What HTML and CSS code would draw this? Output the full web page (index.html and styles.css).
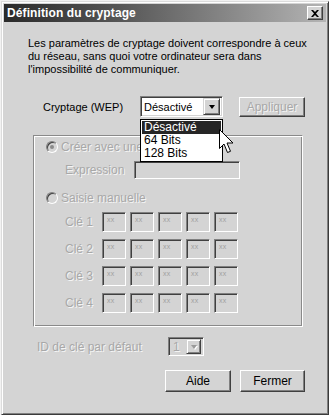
FILE: index.html
```html
<!DOCTYPE html>
<html lang="fr">
<head>
<meta charset="utf-8">
<title>Définition du cryptage</title>
<link rel="stylesheet" href="styles.css">
</head>
<body>
<div class="window">
  <div class="titlebar">
    <span class="title">Définition du cryptage</span>
    <span class="close"><svg width="8" height="7" viewBox="0 0 8 7"><path d="M0 0h2l2 2 2-2h2L5 3.5 8 7H6L4 5 2 7H0l3-3.5z" fill="#000"/></svg></span>
  </div>
  <div class="content">
    <p class="intro">Les paramètres de cryptage doivent correspondre à ceux<br>du réseau, sans quoi votre ordinateur sera dans<br>l'impossibilité de communiquer.</p>

    <div class="row-crypt">
      <span class="lbl-crypt">Cryptage (WEP)</span>
      <div class="combo">
        <span class="combo-val">Désactivé</span>
        <span class="arrow-btn"><span class="tri"></span></span>
        <ul class="droplist">
          <li class="sel">Désactivé</li>
          <li>64 Bits</li>
          <li>128 Bits</li>
        </ul>
        <svg class="cursor" width="17" height="25" viewBox="0 0 17 25"><path d="M0.5 0.5V19.5L5 15L8.5 23.5L11.5 22.3L8 14H14Z" fill="#fff" stroke="#000" stroke-width="1"/></svg>
      </div>
      <span class="btn btn-apply disabled">Appliquer</span>
    </div>

    <div class="group">
      <div class="g-row radio-row">
        <span class="radio checked"></span><span class="dis">Créer avec une</span>
      </div>
      <div class="g-row expr-row">
        <span class="dis lbl-expr">Expression</span>
        <span class="field expr-field"></span>
      </div>
      <div class="g-row radio-row radio2">
        <span class="radio"></span><span class="dis">Saisie manuelle</span>
      </div>
      <div class="g-row key-row first">
        <span class="dis lbl-key">Clé 1</span>
        <span class="field key"><i>xx</i></span><span class="field key"><i>xx</i></span><span class="field key"><i>xx</i></span><span class="field key"><i>xx</i></span><span class="field key"><i>xx</i></span>
      </div>
      <div class="g-row key-row">
        <span class="dis lbl-key">Clé 2</span>
        <span class="field key"><i>xx</i></span><span class="field key"><i>xx</i></span><span class="field key"><i>xx</i></span><span class="field key"><i>xx</i></span><span class="field key"><i>xx</i></span>
      </div>
      <div class="g-row key-row">
        <span class="dis lbl-key">Clé 3</span>
        <span class="field key"><i>xx</i></span><span class="field key"><i>xx</i></span><span class="field key"><i>xx</i></span><span class="field key"><i>xx</i></span><span class="field key"><i>xx</i></span>
      </div>
      <div class="g-row key-row">
        <span class="dis lbl-key">Clé 4</span>
        <span class="field key"><i>xx</i></span><span class="field key"><i>xx</i></span><span class="field key"><i>xx</i></span><span class="field key"><i>xx</i></span><span class="field key"><i>xx</i></span>
      </div>
    </div>

    <div class="row-id">
      <span class="dis lbl-id">ID de clé par défaut</span>
      <span class="field id-combo"><span class="dis id-val">1</span><span class="arrow-btn small"><span class="tri gray"></span></span></span>
    </div>

    <div class="row-buttons">
      <span class="btn btn-aide">Aide</span>
      <span class="btn btn-fermer">Fermer</span>
    </div>
  </div>
</div>
</body>
</html>
```

FILE: styles.css
```css
* { box-sizing: border-box; }
html, body { margin: 0; padding: 0; }
body {
  background: #f2f2f2;
  width: 329px;
  height: 415px;
  overflow: hidden;
  padding: 1px 0 0 1px;
  font-family: "Liberation Sans", Arial, sans-serif;
  font-size: 11px;
  color: #000;
}
.window {
  width: 328px;
  height: 414px;
  background: #d4d4d4;
  border: 1px solid;
  border-color: #dcdcdc #3a3a3a #3a3a3a #dcdcdc;
  box-shadow: inset 1px 1px #fff, inset -1px -1px #808080;
  padding: 2px;
  display: flex;
  flex-direction: column;
}
.titlebar {
  height: 18px;
  background: linear-gradient(to right, #2a2a2a 0%, #555 35%, #b4b4b4 100%);
  display: flex;
  align-items: center;
  justify-content: space-between;
  padding: 0 3px 0 3px;
}
.title {
  color: #fff;
  font-weight: bold;
  font-size: 12px;
  letter-spacing: 0.1px;
}
.close {
  width: 16px;
  height: 14px;
  background: #d4d4d4;
  border: 1px solid;
  border-color: #fff #404040 #404040 #fff;
  box-shadow: inset -1px -1px #808080;
  display: flex;
  align-items: center;
  justify-content: center;
}
.close svg { display: block; margin: 0 1px 0 0; }

.content {
  padding: 0 0 0 24px;
  display: flex;
  flex-direction: column;
}
.intro {
  margin: 15px 0 0 0;
  line-height: 13px;
}

.row-crypt {
  margin-top: 20px;
  height: 21px;
  display: flex;
  align-items: center;
}
.lbl-crypt { margin-left: 15px; width: 97px; }
.combo {
  position: relative;
  width: 83px;
  height: 21px;
  background: #fff;
  border: 1px solid;
  border-color: #808080 #fff #fff #808080;
  box-shadow: inset 1px 1px #404040, inset -1px -1px #d4d4d4;
  display: flex;
  align-items: center;
  justify-content: space-between;
  padding: 2px 2px 2px 3px;
}
.combo-val { font-size: 11px; }
.arrow-btn {
  width: 17px;
  height: 17px;
  background: #d4d4d4;
  border: 1px solid;
  border-color: #d4d4d4 #404040 #404040 #d4d4d4;
  box-shadow: inset 1px 1px #fff, inset -1px -1px #808080;
  display: flex;
  align-items: center;
  justify-content: center;
}
.tri {
  width: 0; height: 0;
  border-left: 3.5px solid transparent;
  border-right: 3.5px solid transparent;
  border-top: 4px solid #000;
}
.tri.gray { border-top-color: #9a9a9a; filter: drop-shadow(1px 1px 0 #fff); }

.droplist {
  position: absolute;
  left: -1px;
  top: 22px;
  width: 83px;
  margin: 0;
  padding: 1px 1px;
  list-style: none;
  background: #fff;
  border: 1px solid #000;
  z-index: 5;
}
.droplist li {
  height: 13px;
  line-height: 13px;
  padding-left: 2px;
  font-size: 12px;
}
.droplist li.sel { background: #262626; color: #fff; }
.cursor {
  position: absolute;
  left: 78px;
  top: 32px;
  z-index: 6;
}

.btn {
  display: flex;
  align-items: center;
  justify-content: center;
  height: 22px;
  background: #d4d4d4;
  border: 1px solid;
  border-color: #fff #404040 #404040 #fff;
  box-shadow: inset -1px -1px #808080;
  font-size: 12px;
}
.btn-apply { margin-left: 16px; width: 66px; height: 20px; }
.disabled, .dis { color: #a8a8a8; text-shadow: 1px 1px 0 #f4f4f4; }

.group {
  margin-top: 18px;
  margin-left: 5px;
  width: 270px;
  height: 192px;
  border: 1px solid;
  border-color: #8a8a8a #fff #fff #8a8a8a;
  box-shadow: inset 1px 1px #fff, inset -1px -1px #8a8a8a;
  padding: 1px 0 0 0;
  display: flex;
  flex-direction: column;
}
.g-row { height: 20px; display: flex; align-items: center; }
.radio-row { padding-left: 12px; }
.radio {
  width: 12px; height: 12px;
  border-radius: 50%;
  border: 1px solid;
  border-color: #808080 #fff #fff #808080;
  box-shadow: inset 1px 1px #404040;
  background: #d4d4d4;
  margin-right: 3px;
  display: flex; align-items: center; justify-content: center;
}
.radio.checked::after {
  content: "";
  width: 4px; height: 4px;
  border-radius: 50%;
  background: #8a8a8a;
}
.dis { font-size: 12px; }
.expr-row { margin-top: 3px; padding-left: 31px; }
.lbl-expr { width: 69px; }
.field {
  background: #d4d4d4;
  border: 1px solid;
  border-color: #808080 #fff #fff #808080;
  box-shadow: inset 1px 1px #404040, inset -1px -1px #d4d4d4;
}
.expr-field { width: 106px; height: 18px; }
.radio2 { margin-top: 8px; }
.key-row { margin-top: 7px; padding-left: 31px; gap: 4px; }
.key-row.first { margin-top: 4px; }
.lbl-key { width: 33px; }
.key {
  width: 24px; height: 20px;
  display: block;
  padding: 3px 0 0 4px;
}
.key i {
  display: block;
  font-style: normal;
  font-size: 7px;
  line-height: 7px;
  color: #a0a0a0;
  letter-spacing: 0.3px;
}

.row-id {
  margin-top: 10px;
  height: 19px;
  display: flex;
  align-items: center;
  padding-left: 9px;
}
.lbl-id { width: 131px; }
.id-combo {
  width: 36px; height: 19px;
  display: flex;
  align-items: center;
  justify-content: space-between;
  padding: 2px 2px 2px 4px;
}
.arrow-btn.small { width: 15px; height: 15px; }

.row-buttons {
  margin-top: 14px;
  display: flex;
  padding-left: 137px;
  gap: 9px;
}
.btn-aide { width: 66px; }
.btn-fermer { width: 65px; }
```
